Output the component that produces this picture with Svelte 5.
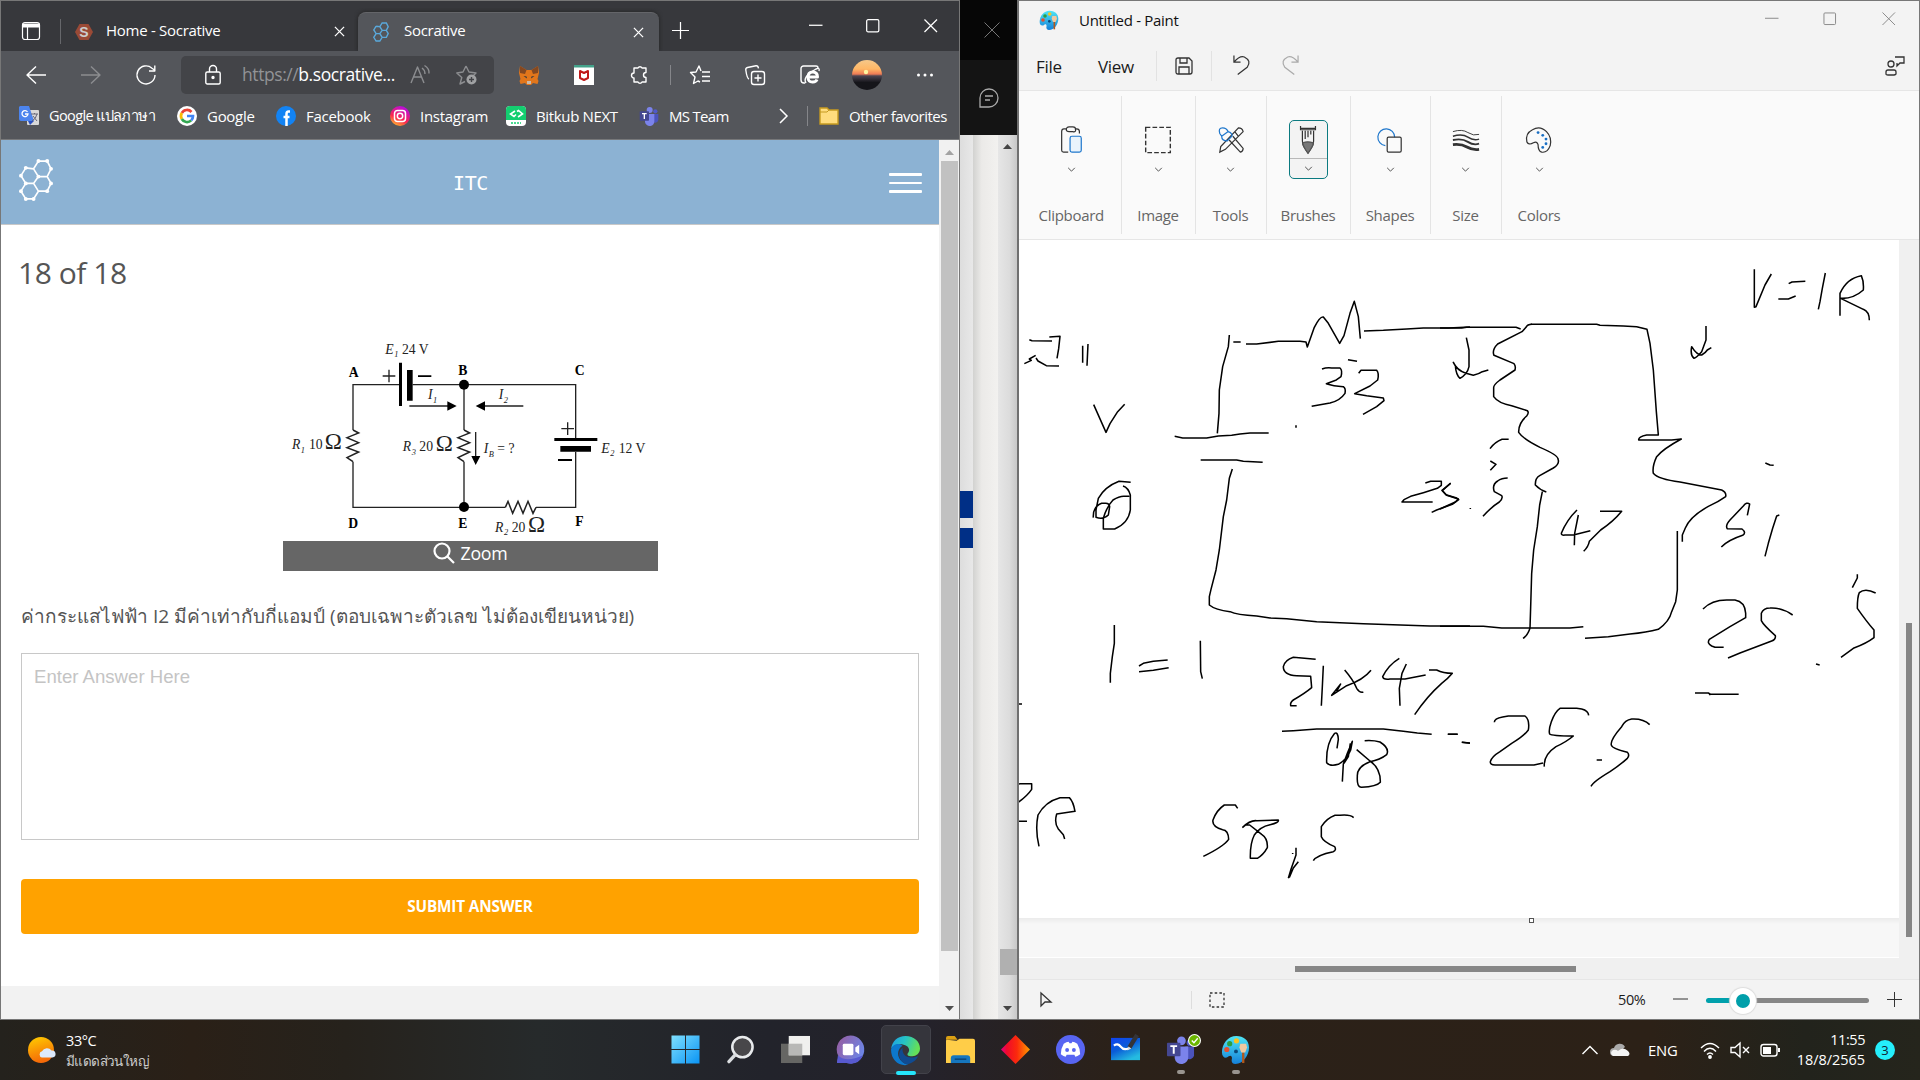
<script>
  const ribbon = ['Clipboard', 'Image', 'Tools', 'Brushes', 'Shapes', 'Size', 'Colors'];
  const apps = ['start', 'search', 'taskview', 'chat', 'edge', 'files', 'diamond', 'discord', 'whiteboard', 'teams', 'paint'];
  const favorites = [
    { id: 'translate', label: 'Google แปลภาษา' },
    { id: 'google', label: 'Google' },
    { id: 'facebook', label: 'Facebook' },
    { id: 'instagram', label: 'Instagram' },
    { id: 'bitkub', label: 'Bitkub NEXT' },
    { id: 'teams', label: 'MS Team' }
  ];

  // Freehand strokes, grouped by the tile of the canvas they start in.
  const sketch = [
    {
      x: 1010, y: 240,
      strokes: [
        'M58 299L66 302L126 303M118 291L150 289L146 326L141 355M43 371L64 361L58 357L77 346M78 354L84 363L109 377L147 378',
        'M218 317V368M234 312L231 377',
        'M251 494L288 577L300 551L323 515L344 493',
        'M658 285L655 320L638 380L628 450L627 520L622 580M670 306H692M708 312L740 312L805 304H870L888 306L892 321L913 262Q930 228 940 231L955 250L989 310L1002 287L1020 220L1033 184L1045 230L1051 296M1062 273L1120 271L1190 267L1240 264L1315 264L1380 261',
        'M494 589L518 594H590L625 588L665 586L690 582L720 579H776M572 660H680L700 664L758 667M667 687L658 715L650 780L640 830L628 930L618 990L603 1048L598 1070V1095Q616 1110 660 1115Q680 1125 740 1128L780 1134L830 1136L920 1145L1060 1151L1260 1158H1380',
        'M1014 359L1041 364M936 387Q950 382 965 384H990Q998 390 993 410L979 420L949 431Q970 438 1000 440Q1008 445 1005 460Q990 482 960 489L905 499M1046 400L1053 391H1100Q1108 400 1103 420L1080 438L1034 461L1070 467L1120 474L1122 482L1100 500L1059 523',
        'M858 556V563M362 727L327 724Q285 740 265 775L258 810V832Q280 840 295 825L299 800Q298 790 287 790H275Q248 800 250 833M339 738Q355 743 361 765V810Q355 850 314 867H280V835Q290 800 309 780Q330 767 345 769H358',
        'M1246 729L1262 724H1294V736L1282 745L1240 758L1202 769L1182 779L1176 786H1268M1322 729L1297 752L1308 764L1340 774L1346 779L1327 793L1280 810L1265 817'
      ]
    },
    {
      x: 1440, y: 240,
      strokes: [
        'M0 264H65L80 262H228L242 267M272 253H470L480 256L550 258L590 260L621 268L630 310L640 390L649 515L655 585H620Q595 590 596 600H695L724 597Q670 626 650 650Q636 680 640 700Q655 718 720 726L845 750Q860 757 857 770Q835 786 805 799Q750 830 736 864L727 885V905',
        'M276 253Q262 253 258 262L246 275L173 312Q155 330 162 346L222 371Q228 378 225 390L180 420Q160 435 161 443V470Q175 490 215 497L262 512Q268 518 260 528Q235 550 236 577Q250 598 300 622Q354 645 354 657Q360 672 340 684L299 707Q285 715 286 735Q300 750 319 756M307 755L299 795L292 860L281 930L275 1000L272 1100L270 1165Q262 1188 249 1195M0 1159H130L185 1164H390L430 1160M712 873V1050L707 1085L695 1115Q688 1145 655 1168Q620 1178 570 1182L505 1190L435 1195',
        'M79 293L87 330V380Q82 403 60 415Q48 405 46 377L40 367Q50 390 78 400L100 406Q117 402 127 395L145 390M798 258V300L785 335Q770 352 762 355Q750 345 755 320Q770 345 785 345Q797 338 802 330L814 323',
        'M943 88V202L948 200L975 135L994 102M1046 131L1056 126L1096 124M1015 177H1045L1067 168M1156 99L1147 145L1140 185L1135 208M1200 227V160Q1220 115 1264 107Q1272 125 1270 150Q1240 177 1202 175L1270 208Q1288 215 1288 241',
        'M150 626Q165 606 186 598H206M151 663L168 673L151 691M203 714Q185 714 173 723Q155 735 163 755L185 767Q190 775 178 786Q155 800 129 829M32 730L6 751L20 766L55 777L46 786L0 807M91 804V807',
        'M411 810Q380 840 364 880Q364 887 375 885H400L451 872M415 825L404 880L403 916M480 814H545Q520 845 482 870L448 904Q445 920 431 934',
        'M922 826L929 792Q920 785 910 798L870 840Q855 857 862 866L906 867Q920 878 908 886Q865 900 844 921M1018 825L1010 828L998 865L985 910L975 949M976 669L990 675L1001 676',
        'M789 1107Q815 1080 860 1080H885Q915 1085 917 1120V1133L870 1160L808 1198Q800 1210 815 1218L825 1222H851M1058 1125Q1025 1102 990 1104Q970 1104 964 1120V1142Q970 1155 1006 1187Q1008 1198 995 1203L900 1239L864 1254M1307 1059Q1275 1043 1258 1058Q1252 1070 1252 1105Q1280 1145 1302 1170V1193Q1280 1210 1240 1225L1203 1252M1252 1003V1014L1237 1043'
      ]
    },
    {
      x: 1010, y: 600,
      strokes: [
        'M313 75V130L307 170L301 220V248M387 198L400 190L430 184L473 180M387 215L430 211L476 203M571 122L572 215L577 236M20 312H36',
        'M917 178L850 172Q825 180 820 200Q820 225 860 227L902 229L905 263Q885 280 850 300Q840 307 842 317H860M940 197L937 260L934 317M1004 210Q1030 240 1040 265Q1050 280 1060 276M1083 211Q1060 240 1010 257L965 286L992 252L980 274M1168 175Q1135 195 1118 230Q1120 240 1140 237H1185L1247 225M1189 192L1176 220L1168 265L1170 317M1257 210H1280Q1300 220 1327 220Q1315 235 1295 250Q1250 290 1214 344',
        'M816 394L850 392L920 387H1120L1180 394L1222 399L1265 403M1313 403H1343M1356 427L1380 430',
        'M981 445L985 418Q984 395 974 400Q948 430 950 488Q960 500 985 493Q1010 480 1022 450L1027 424L1012 460L1000 492L997 545M1021 430L1015 470L1002 490M1064 422Q1090 420 1110 426Q1140 445 1130 464Q1110 480 1080 485Q1040 500 1042 530Q1040 563 1055 562Q1100 560 1111 547Q1112 505 1080 483L1040 449',
        'M20 554L30 551H65V568Q50 590 20 610M20 664H51M87 739Q75 690 84 645Q105 605 150 593H178Q190 605 195 634L140 642Q132 670 145 687L160 704L164 717',
        'M683 625L676 615H643Q620 630 609 660Q605 680 638 689Q655 690 656 718Q640 740 580 769M697 683Q720 660 740 662L805 660Q808 668 780 674Q750 680 733 705Q720 730 721 775H742Q760 765 772 743Q774 715 755 703L719 675L707 674M848 759V762M858 743V765L843 808L835 835M865 785L850 804L838 832M1031 653Q1020 643 990 646H975Q950 655 934 680V710Q940 725 974 740Q980 750 970 755Q920 765 910 782'
      ]
    },
    {
      x: 1440, y: 600,
      strokes: [
        'M24 403H53M65 427L90 429M163 367Q163 355 188 351L205 348H255Q270 360 265 390Q250 410 215 430L180 455Q155 470 151 485Q150 495 165 495H282L309 489M446 346Q445 332 425 327L410 325H360Q345 335 334 365Q325 390 329 402Q335 408 400 408Q380 425 348 440Q310 465 313 500M470 480H486M629 374Q610 355 575 357Q555 360 545 380Q510 420 514 435Q515 445 562 457Q570 465 562 475Q540 495 510 515Q460 545 453 559M765 279L805 279L812 283H896M809 282V286M1128 192L1139 195'
      ]
    }
  ];
</script>

{#snippet hexes()}
  <path d="M11 1h9l4 8-4 8h-9l-5-8zM11 17h9l4 7-4 8h-9M-2 8L6 9M-2 8L-7 16L-2 24H6L11 17M6 24L11 32L6 40H-2L-7 32L-2 24" />
{/snippet}

{#snippet teams()}
  <svg viewBox="0 0 30 30">
    <circle cx="24.5" cy="8" r="3.2" fill="#5059c9" /><circle cx="16" cy="6" r="4.5" fill="#7b83eb" />
    <path d="M20 12h9v9a5 5 0 0 1-9 2z" fill="#4b53bc" /><path d="M9 12h14v10a7 7 0 0 1-14 2z" fill="#7b83eb" />
    <rect x="1" y="8" width="14" height="14" rx="1" fill="#444791" /><path d="M4.5 11.500h7M8 11.500v8" stroke="#fff" stroke-width="2" />
  </svg>
{/snippet}

{#snippet palette()}
  <svg viewBox="0 0 30 30">
    <defs><linearGradient id="pal" x2="0" y2="1"><stop stop-color="#50e6f5" /><stop offset="1" stop-color="#1580d8" /></linearGradient></defs>
    <path d="M16 1C7 1 1 9 1 18c0 5 4 7 7 4 3-2 4 1 3 4 0 2 1 4 4 4 8 0 14-9 14-17S23 1 16 1z" fill="url(#pal)" />
    <circle cx="6" cy="15" r="2.7" fill="#e2502f" /><circle cx="9" cy="9" r="2.7" fill="#2c9e42" /><circle cx="16" cy="6" r="2.7" fill="#f8c322" /><circle cx="15.500" cy="17" r="2" fill="#0b4a7b" />
    <path d="M23 18v11" stroke="#b3581c" stroke-width="2.400" /><path d="M20 9h6l1 4-2 5h-4l-2-5z" fill="#f0c9a0" />
  </svg>
{/snippet}

{#snippet chevron()}
  <svg class="chev" viewBox="0 0 10 6"><path d="M1 1l4 4 4-4" /></svg>
{/snippet}

<div class="desktop">
  <div class="windows">
    <section class="browser">
      <div class="tabs">
        <div class="tab-menu"><svg class="line" viewBox="0 0 20 20"><rect x="1.500" y="1.500" width="17" height="17" rx="2.500" /><path d="M2 3h16v3H2z" fill="#fff" /><path d="M6.500 6v12" /></svg></div>
        <div class="tab">
          <svg class="fav" viewBox="0 0 18 18"><path d="M4.500 1h9L18 9l-4.500 8h-9L0 9z" fill="#9a4a36" /><text x="9" y="14" text-anchor="middle" class="s">S</text></svg>
          <span>Home - Socrative</span>
          <svg class="x" viewBox="0 0 12 12"><path d="M1 1l10 10M11 1L1 11" /></svg>
        </div>
        <div class="tab active">
          <svg class="fav hexblue" viewBox="-9 -1 35 43">{@render hexes()}</svg>
          <span>Socrative</span>
          <svg class="x" viewBox="0 0 12 12"><path d="M1 1l10 10M11 1L1 11" /></svg>
        </div>
        <svg class="plus" viewBox="0 0 18 18"><path d="M9 0v18M0 9h18" /></svg>
        <div class="controls">
          <svg viewBox="0 0 14 14"><path d="M0 6.500h14" /></svg>
          <svg viewBox="0 0 14 14"><rect x=".7" y=".7" width="12.600" height="12.600" rx="1.500" /></svg>
          <svg viewBox="0 0 14 14"><path d="M.5.5l13 13M13.500.5l-13 13" /></svg>
        </div>
      </div>

      <div class="toolbar">
        <svg viewBox="0 0 20 20"><path d="M20 10H1M10 1.500L1 10l9 8.500" /></svg>
        <svg class="dim" viewBox="0 0 20 20"><path d="M0 10h19M10 1.500L19 10l-9 8.500" /></svg>
        <svg viewBox="0 0 20 20"><path d="M19 10A9 9 0 1 1 16 3.200L18.500 5M18.800.5V6H13" /></svg>
        <i></i>
        <div class="address">
          <svg viewBox="0 0 20 20"><rect x="2.800" y="7" width="14.400" height="12" rx="1.500" /><path d="M6.500 7V4a3.500 3.500 0 0 1 7 0v3" /><circle cx="10" cy="12.500" r="1" fill="#fff" /></svg>
          <span><em>https://</em>b.socrative...</span>
          <svg class="dim" viewBox="0 0 20 20"><path d="M1 18L7.500 2 14 18M3.500 12h8M12 3q3 2 3 6M14.500.5q5 3 4.500 8" /></svg>
          <svg class="dim star" viewBox="0 0 21 20"><path d="M10 1l3 6 7 1-3 3M10 1L7 7 .8 8l5 4.500L4 19l5-2.500" /><circle cx="15.500" cy="14.500" r="5" class="fill" /><path d="M15.500 12v5M13 14.500h5" class="cut" /></svg>
        </div>
        <i></i>
        <svg class="solid" viewBox="0 0 20 20"><path d="M1 1l6.500 4h5L19 1l1 7-1.500 6 1 2-1 3-4.500-1-2 2H8l-2-2-4.500 1-1-3 1-2L0 8z" fill="#e2761b" /><path d="M1 1l6.500 4L6 9l-5-1zM19 1l-6.500 4L14 9l5-1z" fill="#854820" /><path d="M4.500 11l3 .5.500 2zM15.500 11l-3 .5-.5 2z" fill="#263442" /><path d="M8 16h4v3H8z" fill="#c9b9aa" /></svg>
        <svg class="solid" viewBox="0 0 20 20"><path d="M0 0h20v20H0z" fill="#fff" /><path d="M0 0h20v2.500H0z" fill="#43a28a" /><path d="M6 6L10 8l4-2v7L10 15 6 13z" fill="none" stroke="#c01818" stroke-width="2" /></svg>
        <svg viewBox="0 0 20 20"><path d="M6 3h3a2.200 2.200 0 0 1 4 0h4v4.500a2.200 2.200 0 0 0 0 5V17h-4a2.200 2.200 0 0 1-4 0H5v-4a2.200 2.200 0 0 1 0-5V3z" /></svg>
        <i class="rule"></i>
        <svg viewBox="0 0 20 20"><path d="M11 6L9 1 6 7 .5 7.500 5 12l-1.500 6.500L8 16l2 1M12 7h8M12 11.500h8M12 16h8" /></svg>
        <svg viewBox="0 0 20 20"><rect x="6.500" y="6.500" width="13" height="13" rx="2.500" /><path d="M13 9.500v7M9.500 13h7M4 14Q2 13.500.8 5 .5 3 2.500 2.500L11 .8q2-.3 2.500 2.500" /></svg>
        <svg viewBox="0 0 20 20"><path d="M5 18H4a3 3 0 0 1-3-3V3.500A2.500 2.500 0 0 1 3.500 1H16a2 2 0 0 1 2 2" /><path d="M9 12h8.500q0-5-4.800-5Q8 7 8 12.200T13 17q3 0 4-2.500" stroke-width="3" /><path d="M6 18Q2 12 16 4q4-2 3 2" /></svg>
        <svg class="avatar" viewBox="0 0 30 30"><defs><linearGradient id="sun" x2="0" y2="1"><stop stop-color="#f6c88a" /><stop offset=".3" stop-color="#ffb765" /><stop offset=".47" stop-color="#ee7a55" /><stop offset=".53" stop-color="#4c4552" /><stop offset=".75" stop-color="#15151a" /></linearGradient></defs><circle cx="15" cy="15" r="15" fill="url(#sun)" /><circle cx="14" cy="12" r="2.200" fill="#fff6a0" /></svg>
        <svg class="solid" viewBox="0 0 20 20"><circle cx="3.500" cy="10" r="1.500" /><circle cx="10" cy="10" r="1.500" /><circle cx="16.500" cy="10" r="1.500" /></svg>
      </div>

      <div class="bookmarks">
        {#each favorites as f}
          <div class="mark">
            {#if f.id === 'translate'}
              <svg viewBox="0 0 20 20"><rect x="8" y="4" width="12" height="15" rx="1" fill="#d8d8d8" /><path d="M1 0h9l5 15H2q-2 0-2-2V1z" fill="#4c84ee" /><path d="M9 15h6l-4 4z" fill="#2b50c0" /><path d="M8.500 6A3 3 0 1 0 9 8H6" fill="none" stroke="#fff" stroke-width="1.300" /><path d="M12 8h7M15.500 7v1M18 8q-1 5-5 7M14 10l4 5" fill="none" stroke="#667" /></svg>
            {:else if f.id === 'google'}
              <svg viewBox="0 0 20 20"><circle cx="10" cy="10" r="10" fill="#fff" /><g fill="none" stroke-width="2.700"><path d="M14.500 6A6 6 0 0 0 4.800 7" stroke="#ea4335" /><path d="M4.800 7a6 6 0 0 0 0 6" stroke="#fbbc05" /><path d="M4.800 13a6 6 0 0 0 9.400 1.400" stroke="#34a853" /><path d="M10 10h6a6 6 0 0 1-1.800 4.400" stroke="#4285f4" /></g></svg>
            {:else if f.id === 'facebook'}
              <svg viewBox="0 0 20 20"><circle cx="10" cy="10" r="10" fill="#1283f4" /><path d="M14 5.500h-1.500q-2 0-2 2.500V20M7.500 11H13.500" fill="none" stroke="#fff" stroke-width="2.500" /></svg>
            {:else if f.id === 'instagram'}
              <svg viewBox="0 0 20 20"><defs><linearGradient id="ig" x1=".2" y1="1" x2=".7" y2="0"><stop stop-color="#ffc229" /><stop offset=".4" stop-color="#fb2450" /><stop offset="1" stop-color="#b50be8" /></linearGradient></defs><circle cx="10" cy="10" r="10" fill="url(#ig)" /><g fill="none" stroke="#fff" stroke-width="1.500"><rect x="4.500" y="4.500" width="11" height="11" rx="3" /><circle cx="10" cy="10" r="2.700" /></g></svg>
            {:else if f.id === 'bitkub'}
              <svg viewBox="0 0 20 20"><rect width="20" height="20" rx="4" fill="#fff" /><path d="M4 0h12q4 0 4 4v10H0V4q0-4 4-4z" fill="#13ce70" /><path d="M9 5L4.500 8 8 10.500l2-2M11 5.500l1.500-1 4 3.500-4.500 3" fill="none" stroke="#fff" stroke-width="1.600" /><path d="M5 17h10" stroke="#13ce70" stroke-width="1.300" stroke-dasharray="2 1" /></svg>
            {:else}{@render teams()}{/if}
            <span class={f.id}>{f.label}</span>
          </div>
        {/each}
        <svg class="more" viewBox="0 0 10 16"><path d="M1 1l7 7-7 7" /></svg>
        <i class="rule"></i>
        <div class="mark"><svg viewBox="0 0 20 20"><path d="M1 2h7l2 2h9v14H1z" fill="#ffdc7e" stroke="#c69a20" stroke-width="1.400" /><path d="M1 6h7l2-2" fill="none" stroke="#c69a20" /></svg><span class="other">Other favorites</span></div>
      </div>

      <div class="view">
        <main>
          <header>
            <svg class="logo" viewBox="-9 -1 35 43">{@render hexes()}
              <g fill="#fff" stroke="none"><circle cx="11" cy="1" r="2" /><circle cx="20" cy="1" r="2" /><circle cx="24" cy="9" r="2" /><circle cx="24" cy="24" r="2" /><circle cx="-2" cy="8" r="2" /><circle cx="-7" cy="16" r="2" /><circle cx="-7" cy="32" r="2" /><circle cx="-2" cy="40" r="2" /><circle cx="6" cy="40" r="2" /><circle cx="20" cy="32" r="2" /><circle cx="-2" cy="24" r="2" /><circle cx="11" cy="17" r="2" /></g>
            </svg>
            <h1>ITC</h1>
            <div class="burger"><i></i><i></i><i></i></div>
          </header>
          <h2>18 of 18</h2>
          <svg class="circuit" viewBox="39 0 1125 663">
            <g fill="none" stroke="#222" stroke-width="4">
              <path d="M388 194H249V330M249 425V562H706M798 562H917V396M917 354V194H428M582 194V330M582 425V562" />
              <path d="M249 330l17 9-35 14 35 15-35 15 35 13-35 17 18 12M582 330l17 9-35 14 35 15-35 15 35 13-35 17 18 12M706 562l8-18 14 36 16-36 15 36 15-36 15 36 9-18" stroke-width="4.500" />
              <path d="M418 258H540M760 258H640M617 336V412M338 168h38M357 149v38M874 326h38M893 307v38" />
            </g>
            <path d="M387 128h9v130h-9zM411 150h17v92h-17zM853 354h129v9H853zM871 378h92v17h-92zM444 166h40v5h-40zM864 417h42v6h-42z" />
            <circle cx="582" cy="194" r="15" /><circle cx="582" cy="561" r="15" />
            <path d="M532 244l28 14-28 14zM645 244l-28 14 28 14zM604 408h27l-14 27z" />
            <g class="node"><text x="236" y="171">A</text><text x="565" y="164">B</text><text x="914" y="164">C</text><text x="235" y="623">D</text><text x="565" y="623">E</text><text x="916" y="617">F</text></g>
            <g class="lbl">
              <text y="102"><tspan class="it" x="346">E</tspan><tspan class="sub" x="373" dy="10">1</tspan><tspan x="396" dy="-10">24 V</tspan></text>
              <text y="238"><tspan class="it" x="474">I</tspan><tspan class="sub" x="489" dy="10">1</tspan></text>
              <text y="238"><tspan class="it" x="686">I</tspan><tspan class="sub" x="701" dy="10">2</tspan></text>
              <text y="388"><tspan class="it" x="66">R</tspan><tspan class="sub" x="92" dy="10">1</tspan><tspan x="117" dy="-10">10</tspan></text><text x="164" y="388" class="ohm">Ω</text>
              <text y="394"><tspan class="it" x="398">R</tspan><tspan class="sub" x="425" dy="10">3</tspan><tspan x="448" dy="-10">20</tspan></text><text x="497" y="394" class="ohm">Ω</text>
              <text y="400"><tspan class="it" x="641">I</tspan><tspan class="sub" x="656" dy="12">B</tspan><tspan x="682" dy="-12">= ?</tspan></text>
              <text y="399"><tspan class="it" x="994">E</tspan><tspan class="sub" x="1021" dy="10">2</tspan><tspan x="1046" dy="-10">12 V</tspan></text>
              <text y="636"><tspan class="it" x="675">R</tspan><tspan class="sub" x="702" dy="10">2</tspan><tspan x="725" dy="-10">20</tspan></text><text x="774" y="636" class="ohm">Ω</text>
            </g>
          </svg>
          <div class="zoom"><svg viewBox="0 0 22 22"><circle cx="9" cy="9" r="7.500" /><path d="M14.500 14.500L21 21" /></svg><span>Zoom</span></div>
          <p>ค่ากระแสไฟฟ้า I2 มีค่าเท่ากับกี่แอมป์ (ตอบเฉพาะตัวเลข ไม่ต้องเขียนหน่วย)</p>
          <div class="answer">Enter Answer Here</div>
          <div class="submit">SUBMIT ANSWER</div>
        </main>
        <div class="scroll"><svg viewBox="0 0 9 5"><path d="M0 5l4.500-5L9 5z" fill="#a3a3a3" /></svg><b></b><svg viewBox="0 0 9 5"><path d="M0 0l4.500 5L9 0z" fill="#505050" /></svg></div>
      </div>
    </section>

    <section class="behind">
      <div class="b1"><svg viewBox="0 0 16 16"><path d="M.5.5l15 15M15.500.5l-15 15" /></svg></div>
      <div class="b2"><svg viewBox="0 0 20 20"><path d="M1 19V10a9 9 0 1 1 9 9zM6 8h8M6 12h5" /></svg></div>
      <div class="b3">
        <div class="pane"><i></i><i></i></div><div class="mid"></div>
        <div class="side"><svg viewBox="0 0 9 5"><path d="M0 5l4.500-5L9 5z" /></svg><b></b><svg viewBox="0 0 9 5"><path d="M0 0l4.500 5L9 0z" /></svg></div>
      </div>
    </section>

    <section class="paint">
      <div class="title">
        {@render palette()}<span>Untitled - Paint</span>
        <div class="controls">
          <svg viewBox="0 0 14 14"><path d="M0 6.500h14" /></svg>
          <svg viewBox="0 0 14 14"><rect x="1" y="1" width="12" height="12" rx="1" /></svg>
          <svg viewBox="0 0 14 14"><path d="M.5.5l13 13M13.500.5l-13 13" /></svg>
        </div>
      </div>
      <div class="menu">
        <span class="file">File</span><span class="vw">View</span><i></i>
        <svg class="save" viewBox="0 0 18 18"><path d="M1 3q0-2 2-2h11l3 3v11q0 2-2 2H3q-2 0-2-2zM5 1v5h7V1M4 17v-7h10v7" /></svg><i></i>
        <svg class="undo" viewBox="0 0 18 20"><path d="M1 0v7h7M1 7Q7 0 12 1.500q8 4 3 11L5 20" /></svg>
        <svg class="undo redo" viewBox="0 0 18 20"><path d="M17 0v7h-7M17 7Q11 0 6 1.500q-8 4-3 11L13 20" /></svg>
        <svg class="share" viewBox="0 0 20 20"><circle cx="6" cy="9" r="3" /><path d="M1 19v-2q0-2 2-2h6q2 0 2 2v2q-1 1-2 1H3q-2 0-2-1zM10 2h9v6h-4l-3 3V8" /></svg>
      </div>
      <div class="ribbon">
        {#each ribbon as name}
          <div class="group">
            <div class="tool" class:picked={name === 'Brushes'}>
              {#if name === 'Clipboard'}
                <svg viewBox="0 0 28 30"><path d="M9 3H6.500Q4 3 4 6v20q0 2 2 2h5M18 3h2q3 0 3 3v2M9 4q0-3 3-3h4q3 0 3 3t-3 2h-4q-3 0-3-2z" /><rect x="13" y="11" width="12" height="17" rx="2" class="blue" fill="#eaf4fc" /></svg>
              {:else if name === 'Image'}
                <svg viewBox="0 0 28 30"><rect x=".8" y="1.500" width="26.400" height="27" stroke-dasharray="5 2.300" stroke-width="1.500" /></svg>
              {:else if name === 'Tools'}
                <svg viewBox="0 0 28 30"><path d="M22 2q4 0 5 4L8 25l-6 3 1-6zM18 6l4 5M12 15L24 28q3-1 3-4L16 11" /><path d="M2 8Q0 2 5 2q4 0 6 4 5 2 4 5l-5 5q-6 0-6-5zM4 11l7-5" class="blue" /></svg>
              {:else if name === 'Brushes'}
                <svg viewBox="0 0 28 30"><path d="M6 0v4h16V0M6 2.500h16M8 5v11q0 4 2 7l4 6 4-6q2-3 2-7V5M11 5v9M14 5v7M17 5v4" /><path d="M8.500 18q5-2 11 0 0 4-5.500 11-5-6-5.500-11z" fill="#777" stroke="#555" /></svg>
              {:else if name === 'Shapes'}
                <svg viewBox="0 0 28 30"><path d="M9 21A9 9 0 1 1 19 12" class="blue" /><rect x="11" y="12" width="15" height="16" rx="1.500" /></svg>
              {:else if name === 'Size'}
                <svg viewBox="0 0 28 30"><path d="M0 6Q10 3 16 7t12 2" stroke-width="1" /><path d="M0 11q10-3 16 1t12 2" stroke-width="1.500" /><path d="M0 15q10-2 16 2t12 2" stroke-width="2" /><path d="M0 20q9-1 15 2.500t13 2.500" stroke-width="3" /></svg>
              {:else}
                <svg viewBox="0 0 28 30"><path d="M1 17Q-1 8 7 4q8-5 15 2 6 6 4 15-3 8-9 7-4-1-4-8-1-4-5-2-5 3-7-1z" /><g fill="#1a6fc4" stroke="none"><circle cx="13" cy="7" r="1.500" /><circle cx="18" cy="10" r="1.500" /><circle cx="21.500" cy="14" r="1.500" /><circle cx="21.500" cy="19" r="1.500" /><circle cx="18" cy="23" r="1.500" /></g></svg>
              {/if}
              {@render chevron()}
            </div>
            <span>{name}</span>
          </div>
        {/each}
      </div>
      <div class="work">
        <div class="stage">
          <svg class="canvas" viewBox="1019 240 880 678">
            {#each sketch as tile}
              <g transform="translate({tile.x} {tile.y}) scale(.33333)">
                {#each tile.strokes as d}<path {d} />{/each}
              </g>
            {/each}
          </svg>
          <div class="below"><i></i></div>
        </div>
        <div class="vbar"><b></b></div>
      </div>
      <div class="hbar"><b></b></div>
      <div class="status">
        <svg class="cursor" viewBox="0 0 12 16"><path d="M1 1v13l4-4h6z" /></svg><i></i>
        <svg class="sel" viewBox="0 0 16 16"><rect x="1" y="1" width="14" height="14" stroke-dasharray="2.500 2.200" /></svg>
        <span>50%</span>
        <svg class="pm" viewBox="0 0 15 15"><path d="M0 7h15" /></svg>
        <div class="slider"><b></b></div>
        <svg class="pm" viewBox="0 0 15 15"><path d="M0 7.500h15M7.500 0v15" /></svg>
      </div>
    </section>
  </div>

  <footer>
    <div class="weather">
      <svg viewBox="0 0 28 26"><defs><linearGradient id="wx" x2=".3" y2="1"><stop stop-color="#ffcf00" /><stop offset="1" stop-color="#f56a08" /></linearGradient></defs><circle cx="13" cy="13" r="13" fill="url(#wx)" /><path d="M14 20.500a3.200 3.200 0 0 1 0-6.200 5.500 5.500 0 0 1 9.500-.8 3.500 3.500 0 0 1 1 7z" fill="#dce9fb" /></svg>
      <div><span>33°C</span><small>มีแดดส่วนใหญ่</small></div>
    </div>
    <div class="apps">
      {#each apps as app}
        <div class="app {app}">
          {#if app === 'start'}
            <svg viewBox="0 0 30 30"><defs><linearGradient id="win" x2="1" y2="1"><stop stop-color="#7fe0ff" /><stop offset="1" stop-color="#0a94f4" /></linearGradient></defs><path d="M.5.5h14v14H.5zM15.500.5h14v14h-14zM.5 15.500h14v14H.5zM15.500 15.500h14v14h-14z" fill="url(#win)" /></svg>
          {:else if app === 'search'}
            <svg viewBox="0 0 30 30"><circle cx="17" cy="12.500" r="10.500" fill="#48474a" stroke="#e8eaec" stroke-width="2.600" /><path d="M9.500 20.500L3 27.500" stroke="#dadde0" stroke-width="3.500" stroke-linecap="round" /></svg>
          {:else if app === 'taskview'}
            <svg viewBox="0 0 30 30"><rect y="9" width="22" height="20" fill="#666664" /><rect x="8" y="1" width="22" height="20" fill="#f0f0ee" /><rect x="8" y="9" width="14" height="12" fill="#b8b8b6" /></svg>
          {:else if app === 'chat'}
            <svg viewBox="0 0 30 30"><defs><linearGradient id="ch" x2="1" y2=".5"><stop stop-color="#995b9d" /><stop offset="1" stop-color="#6d84e4" /></linearGradient></defs><path d="M15 .5a14.500 14.500 0 1 1-4 28.500H1l1.500-7A14.500 14.500 0 0 1 15 .5z" fill="url(#ch)" /><path d="M2 21q8 8 26 0-5 11-17 8H1z" fill="#585ad0" /><rect x="7" y="9" width="11" height="12" rx="1.500" fill="#fff" /><path d="M20 13l4-3v10l-4-3z" fill="#fff" /></svg>
          {:else if app === 'edge'}
            <svg viewBox="0 0 30 30"><defs><linearGradient id="ed" x2="1" y2=".3"><stop stop-color="#1f9be6" /><stop offset=".5" stop-color="#25c4c5" /><stop offset="1" stop-color="#65df58" /></linearGradient></defs><path d="M0 14C1 5 7 0 15 0c9 0 15 6 15 13 0 5-4 8-8 8-5 0-6-2-4-4 2-3 0-7-5-8S2 9 0 14z" fill="url(#ed)" /><path d="M0 14c2-6 8-7 12-4-4 2-7 9-2 15 4 4 7 5 10 4C10 33 0 26 0 14z" fill="#0c78cc" /><path d="M12 12c-1 7 4 13 16 9-2 5-9 9-13 8C8 26 6 17 12 12z" fill="#104b91" /></svg>
          {:else if app === 'files'}
            <svg viewBox="0 0 30 30"><path d="M0 3q0-2 2-2h7l3 4H0z" fill="#dba013" /><path d="M0 6q0-1 1-1l10 1 3-2h14q2 0 2 2v23H0z" fill="#ffcd48" /><path d="M5 29v-5q0-3 3-3h14q3 0 3 3v5z" fill="#1676be" /><path d="M9 25h12" stroke="#0b4477" stroke-width="1.500" /></svg>
          {:else if app === 'diamond'}
            <svg viewBox="0 0 30 30"><defs><linearGradient id="dm"><stop stop-color="#e0008a" /><stop offset=".2" stop-color="#ef0b2b" /><stop offset=".55" stop-color="#fb2a0c" /><stop offset="1" stop-color="#ff9d00" /></linearGradient></defs><path d="M15 0l15 15-15 15L0 15z" fill="url(#dm)" /></svg>
          {:else if app === 'discord'}
            <svg viewBox="0 0 30 30"><circle cx="15" cy="15" r="15" fill="#5865f2" /><path d="M8 9q3-2 5-2l1 1.500h2L17 7q2 0 5 2 3 5 3 11-3 2.500-5 2.500l-1-2h-8l-1 2q-2 0-5-2.500 0-6 3-11z" fill="#fff" /><circle cx="11.500" cy="15.500" r="2" fill="#5865f2" /><circle cx="18.500" cy="15.500" r="2" fill="#5865f2" /></svg>
          {:else if app === 'whiteboard'}
            <svg viewBox="0 0 30 30"><defs><linearGradient id="wb" x2=".6" y2="1"><stop stop-color="#1143f0" /><stop offset=".5" stop-color="#0a5cd8" /><stop offset="1" stop-color="#25bbe0" /></linearGradient></defs><path d="M0 3h30v23H0z" fill="url(#wb)" /><path d="M3 11q4-3 7 1t8 2" fill="none" stroke="#fff" stroke-width="2.400" /><path d="M19 13L27 0" stroke="#343438" stroke-width="4.500" /><path d="M17 16l1-4 3 2z" fill="#ddd" /></svg>
          {:else if app === 'teams'}
            {@render teams()}<svg class="ok" viewBox="0 0 12 12"><circle cx="6" cy="6" r="5.500" fill="#6bb700" stroke="#fff" /><path d="M3.500 6l2 2 3.500-4" fill="none" stroke="#fff" stroke-width="1.300" /></svg>
          {:else}{@render palette()}{/if}
          <i></i>
        </div>
      {/each}
    </div>
    <div class="tray">
      <svg viewBox="0 0 20 20"><path d="M2.500 14L10 6.500l7.500 7.500" /></svg>
      <svg class="cloud" viewBox="0 0 20 14"><path d="M4 13a4 4 0 0 1 0-8A6 6 0 0 1 15 4l-6 5z" fill="#aaa" stroke="none" /><path d="M3 13q-4-3 0-6 3-1 5 1 5-5 10 0 3 3 0 5z" fill="#f4f4f4" stroke="none" /></svg>
      <span class="lang">ENG</span>
      <svg viewBox="0 0 20 20"><path d="M1 8q9-9 18 0M4 11.500q6-6.500 12 0M7 14.500q3-3 6 0" /><circle cx="10" cy="17" r="1.200" fill="#fff" /></svg>
      <svg viewBox="0 0 20 20"><path d="M1 7.500h4L10 3v14l-5-4.500H1zM13 7l6 6M19 7l-6 6" /></svg>
      <svg viewBox="0 0 20 20"><rect x="1" y="4.500" width="16" height="11.500" rx="2.500" /><path d="M3 7h8v7H3z" fill="#fff" stroke="none" /><path d="M19 8v4" stroke-width="2" /></svg>
      <div class="clock"><span>11:55</span><span class="date">18/8/2565</span></div>
      <b>3</b>
    </div>
  </footer>
</div>

<style>
  :global(body) { margin: 0; overflow: hidden; }
  * { box-sizing: border-box; }
  svg { display: block; flex: none; overflow: visible; }
  .desktop { width: 1920px; height: 1080px; display: flex; flex-direction: column; font-family: 'Open Sans', 'Noto Sans', sans-serif; font-size: 15px; white-space: nowrap; }
  .windows { display: flex; height: 1020px; }

  .browser { width: 960px; border: 1px solid #777; display: flex; flex-direction: column; background: #54565b; color: #fff; }
  .tabs { height: 50px; display: flex; background: #37383c; }
  .tab-menu { width: 60px; margin: 18px 0 7px; border-right: 1px solid #66676b; padding: 2px 0 0 20px; }
  .tab-menu svg { width: 20px; height: 20px; fill: none; stroke: #fff; stroke-width: 1.2; }
  .tab { height: 39px; margin-top: 11px; display: flex; align-items: center; }
  .tab:not(.active) { width: 297px; padding: 0 13px 0 14px; }
  .tab.active { width: 301px; padding: 0 15px 0 14px; background: #54565b; border-radius: 8px 8px 0 0; border-top: 1px solid #646569; box-shadow: 0 0 4px #222; clip-path: inset(-4px -4px 0 -4px); }
  .tab .fav { width: 18px; height: 20px; }
  .tab span { flex: 1; margin-left: 13px; letter-spacing: -.28px; padding-bottom: 4px; }
  .tab.active span { margin-left: 14px; }
  .s { font: bold 14px 'Liberation Sans', sans-serif; fill: #ccc; }
  .hexblue { fill: none; stroke: #5aa9dc; stroke-width: 3; }
  .x { width: 11px; height: 11px; stroke: #fff; stroke-width: 1.4; }
  .plus { width: 17px; height: 17px; margin: 21px 0 0 13px; stroke: #fff; stroke-width: 1.3; }
  .controls { display: flex; gap: 44px; fill: none; stroke: #fff; margin: 18px 22px 0 auto; }
  .controls svg { width: 13.5px; height: 13.5px; stroke-width: 1.3; }
  .toolbar { height: 47px; padding-left: 7px; display: grid; grid-template-columns: 55px 55px 55px 8px 313px 7px 55px 55px 55px 8px 52px 57px 54px 60px 56px; align-items: center; justify-items: center; }
  .toolbar svg { width: 20px; height: 20px; fill: none; stroke: #fff; stroke-width: 1.4; stroke-linejoin: round; }
  .toolbar svg.solid { stroke: none; fill: #fff; }
  .toolbar svg.avatar { width: 30px; height: 30px; stroke: none; }
  .toolbar .dim { stroke: #8c8d90; }
  .toolbar .fill { fill: #a0a1a3; stroke: none; }
  .toolbar .cut { stroke: #424347; }
  .rule { width: 1px; height: 20px; background: #85868a; }
  .address { width: 313px; height: 38px; background: #434448; border-radius: 5px; display: flex; align-items: center; padding-left: 22px; }
  .address span { width: 163px; margin-left: 19px; font-size: 17.500px; letter-spacing: -.42px; padding-bottom: 2px; }
  .address em { font-style: normal; color: #929396; }
  .address .star { margin-left: 26px; width: 21px; }
  .address .dim:not(.star) { margin-left: 5px; }
  .bookmarks { height: 42px; padding-left: 18px; display: grid; grid-template-columns: 158px 99px 114px 116px 133px 133px 24px 23px 140px; align-items: center; padding-bottom: 6px; border-bottom: 1px solid #77787a; }
  .mark { display: flex; align-items: center; gap: 10px; letter-spacing: -.28px; }
  .mark svg { width: 20px; height: 20px; }
  .mark .translate { font-size: 14.500px; letter-spacing: -.6px; }
  .mark .bitkub { letter-spacing: -.35px; }
  .mark .teams { letter-spacing: -.7px; }
  .mark .other { letter-spacing: -.5px; }
  .more { width: 10px; height: 16px; fill: none; stroke: #fff; stroke-width: 1.5; justify-self: center; }
  .bookmarks .rule { justify-self: center; }

  .view { flex: 1; display: flex; background: #f2f2f2; }
  main { width: 938px; height: 846px; background: #fff; display: flex; flex-direction: column; color: #555; }
  header { height: 85px; background: #8cb2d3; border-bottom: 1px solid #c8c8c8; display: grid; grid-template-columns: 1fr auto 1fr; align-items: center; padding: 0 17px 0 18px; }
  .logo { width: 34px; height: 42px; margin-bottom: 4px; fill: none; stroke: #fff; stroke-width: 1.7; }
  h1 { margin: 1px 0 0; font: 400 20px 'DejaVu Sans Mono', monospace; letter-spacing: -.4px; color: #fff; }
  .burger { justify-self: end; width: 33px; margin-top: 2px; display: flex; flex-direction: column; gap: 6px; }
  .burger i { height: 2.5px; background: #fff; border-radius: 1px; }
  h2 { margin: 27px 0 0 17px; height: 42px; line-height: 42px; font-weight: 400; font-size: 30px; letter-spacing: -.45px; }
  .circuit { width: 375px; height: 221px; margin: 26px auto 0; fill: #000; }
  .circuit text { font-family: 'Liberation Serif', serif; }
  .node { font-weight: bold; font-size: 41px; }
  .lbl { font-size: 41px; fill: #222; }
  .it { font-style: italic; }
  .sub { font-size: 25px; font-style: italic; }
  .circuit .ohm { font-size: 69px; }
  .zoom { width: 375px; height: 30px; margin: 0 auto; background: #666; color: #fff; display: flex; justify-content: center; gap: 6px; font-size: 17.800px; line-height: 25px; }
  .zoom span { letter-spacing: -.3px; }
  .zoom svg { width: 22px; height: 22px; margin-top: 1px; fill: none; stroke: #fff; stroke-width: 2.200; }
  p { margin: 29px 0 0 20px; height: 32px; line-height: 32px; font-size: 19px; }
  .answer { margin: 21px 20px 0; height: 187px; border: 1px solid #c8c8c8; padding: 11px 12px; font: 18.600px/24px 'Liberation Sans', sans-serif; color: #c4c4c4; }
  .submit { margin: 39px 20px 0; height: 55px; border-radius: 4px; background: #ffa200; color: #fff; font-weight: 700; font-size: 15.300px; line-height: 55px; text-align: center; letter-spacing: -.15px; }
  .scroll { width: 20px; background: #f1f1f1; display: flex; flex-direction: column; align-items: center; padding: 10px 0 8px; }
  .scroll svg { width: 9px; height: 5px; }
  .scroll b { width: 17px; height: 790px; background: #c1c1c1; margin: 6px 0 auto; }

  .behind { width: 59px; border-right: 2px solid #707070; display: flex; flex-direction: column; }
  .b1 { height: 60px; background: #060606; padding: 22px 0 0 24px; }
  .b1 svg { width: 16px; height: 16px; stroke: #777; }
  .b2 { height: 75px; background: #141414; padding: 28px 0 0 19px; }
  .b2 svg { width: 20px; height: 20px; fill: none; stroke: #aaa; stroke-width: 1.3; }
  .b3 { flex: 1; display: flex; border-bottom: 1px solid #777; }
  .pane { width: 13px; background: linear-gradient(90deg, #ddd, #e8e8e8); padding-top: 356px; display: flex; flex-direction: column; gap: 10px; }
  .pane i { height: 27px; background: #002f86; }
  .pane i + i { height: 20px; }
  .mid { width: 25px; background: linear-gradient(90deg, #d2d2d0, #ebeae8 35%, #f2f1ef); }
  .side { width: 19px; background: linear-gradient(90deg, #e6e6e6, #dcdcdc 60%, #c8c8c8); display: flex; flex-direction: column; align-items: center; padding: 9px 0 8px; }
  .side svg { width: 9px; height: 5px; fill: #444; }
  .side b { width: 17px; height: 26px; background: #b0b0b0; margin: auto 0 31px auto; }

  .paint { width: 901px; border: 1px solid #777; border-left: 0; background: #f3f3f3; color: #1b1b1b; display: flex; flex-direction: column; }
  .title { height: 43px; display: flex; padding-left: 20px; color: #111; line-height: 38px; letter-spacing: -.3px; }
  .title > :global(svg) { width: 20px; height: 20px; margin: 9px 0 0; }
  .title span { margin-left: 20px; }
  .title .controls { gap: 45px; margin: 11px 24px 0 auto; stroke: #888; }
  .title .controls svg { stroke-width: 1; }
  .menu { height: 46px; display: flex; align-items: center; font-size: 17px; letter-spacing: -.3px; }
  .menu span { padding-bottom: 2px; }
  .menu i { width: 1px; height: 30px; background: #e2e2e2; margin-bottom: 3px; }
  .menu svg { fill: none; stroke: #333; stroke-width: 1.3; margin-bottom: 3px; }
  .file { width: 62px; margin-left: 17px; }
  .vw { width: 58px; }
  .menu .save { width: 18px; height: 18px; margin: 0 18px 3px; }
  .menu .undo { width: 17px; height: 20px; margin: 0 11px 4px 21px; }
  .menu .redo { stroke: #aaa; }
  .menu .share { width: 20px; height: 20px; margin: 0 14px 4px auto; }
  .ribbon { height: 150px; border: solid #e6e6e6; border-width: 1px 0; background: #fafafa; padding: 5px 0 5px 3px; display: grid; grid-template-columns: 99.500px 74px 71px 84px 80px 71px 75px; }
  .group { border-right: 1px solid #e4e4e4; display: flex; flex-direction: column; align-items: center; color: #666; letter-spacing: -.3px; }
  .group:last-child { border: 0; }
  .tool { margin-top: 24px; width: 39px; height: 59px; display: flex; flex-direction: column; align-items: center; padding-top: 5px; border: 1px solid transparent; fill: none; stroke: #333; stroke-width: 1.3; }
  .picked { border: 1px solid #0b7a80; border-radius: 5px; background: linear-gradient(#f3f3f3 37px, #b8b8b8 37px 38px, #f3f3f3 38px); }
  .tool > svg:first-child { width: 28px; height: 28px; }
  .tool .blue { stroke: #1f77cc; }
  .chev { width: 9px; height: 5px; margin-top: 13px; stroke-width: 1; }
  .picked .chev { margin-top: 12px; }
  .group span { margin-top: 26px; }
  .work { height: 719px; display: flex; background: #f0f0f0; }
  .stage { width: 880px; }
  .canvas { width: 880px; height: 678px; background: #fff; fill: none; stroke: #000; stroke-width: 4.600; stroke-linejoin: round; overflow: hidden; }
  .below { height: 40px; background: linear-gradient(#ebebeb, #f7f7f7 6px); padding-left: 510px; border-bottom: 1px solid #fff; }
  .below i { display: block; width: 5px; height: 5px; border: 1px solid #555; background: #fff; }
  .vbar { flex: 1; padding: 383px 0 0 7px; }
  .vbar b { display: block; width: 6px; height: 314px; background: #868686; }
  .hbar { height: 20px; background: #f0f0f0; padding: 7px 0 0 276px; }
  .hbar b { display: block; width: 281px; height: 6px; background: #868686; }
  .status { flex: 1; border-top: 1px solid #e6e6e6; display: flex; align-items: center; fill: none; stroke: #333; font-size: 14.500px; letter-spacing: -.4px; }
  .cursor { width: 12px; height: 16px; margin-left: 21px; stroke-width: 1.3; }
  .status i { width: 1px; height: 18px; background: #ddd; margin-left: 139px; }
  .sel { width: 16px; height: 16px; margin-left: 17px; stroke-width: 1.3; }
  .status span { stroke: none; width: 55px; margin-left: 393px; }
  .pm { width: 15px; height: 15px; }
  .slider { width: 163px; height: 5px; margin: 2px 18px 0; border-radius: 3px; background: linear-gradient(90deg, #00a0ac 36px, #868686 36px); display: flex; align-items: center; padding-left: 24px; }
  .slider b { flex: none; width: 26px; height: 26px; border-radius: 50%; border: 6.500px solid #fff; background: #009faa; box-shadow: 0 0 1px 1px #ddd; }

  footer { height: 60px; display: grid; grid-template-columns: 658px 605px 1fr; color: #fff; background: linear-gradient(90deg, #24221d, #2a2017 10%, #26221c 18%, #262a2b 28%, #22232b 40%, #24222b 48%, #2b2119 58%, #2c2117 86%, #22231c 94%, #25251c); }
  .weather { display: flex; padding: 17px 0 0 28px; }
  .weather svg { width: 28px; height: 26px; }
  .weather div { display: flex; flex-direction: column; margin: -6px 0 0 10px; line-height: 20px; font-size: 14.500px; letter-spacing: -.4px; }
  .weather small { font-size: 13.500px; letter-spacing: -.6px; color: #ccc; }
  .apps { display: grid; grid-template-columns: repeat(11, 55px); justify-items: center; }
  .app { width: 50px; height: 49px; margin-top: 5px; border-radius: 5px; display: grid; grid-template-rows: 45px 4px; justify-items: center; align-items: center; position: relative; }
  .app > :global(svg) { width: 29px; height: 29px; margin-top: 4px; }
  .app > i { border-radius: 2px; height: 4px; grid-row: 2; }
  .edge { background: #35353c; border: 1px solid #42424a; }
  .edge > i { width: 20px; background: #25e5fb; }
  .app.teams > i, .app.paint > i { width: 8px; background: #99948f; }
  .app > svg.ok { position: absolute; width: 13px; height: 13px; top: 9px; right: 5px; margin: 0; }
  .app.paint { background: none; border: 0; }
  .tray { display: flex; align-items: center; padding-left: 317px; }
  .tray svg { width: 20px; height: 20px; fill: none; stroke: #fff; stroke-width: 1.4; margin-right: 10px; }
  .tray .cloud { height: 14px; margin-right: 18px; }
  .lang { width: 52px; font-size: 14.800px; letter-spacing: -.2px; }
  .clock { width: 75px; display: flex; flex-direction: column; align-items: flex-end; line-height: 20px; font-size: 14.500px; letter-spacing: -.45px; }
  .clock .date { letter-spacing: -.05px; }
  .tray b { width: 20px; height: 20px; margin-left: 10px; border-radius: 50%; background: #25effb; color: #123; font-weight: 400; font-size: 13px; line-height: 20px; text-align: center; }
</style>
